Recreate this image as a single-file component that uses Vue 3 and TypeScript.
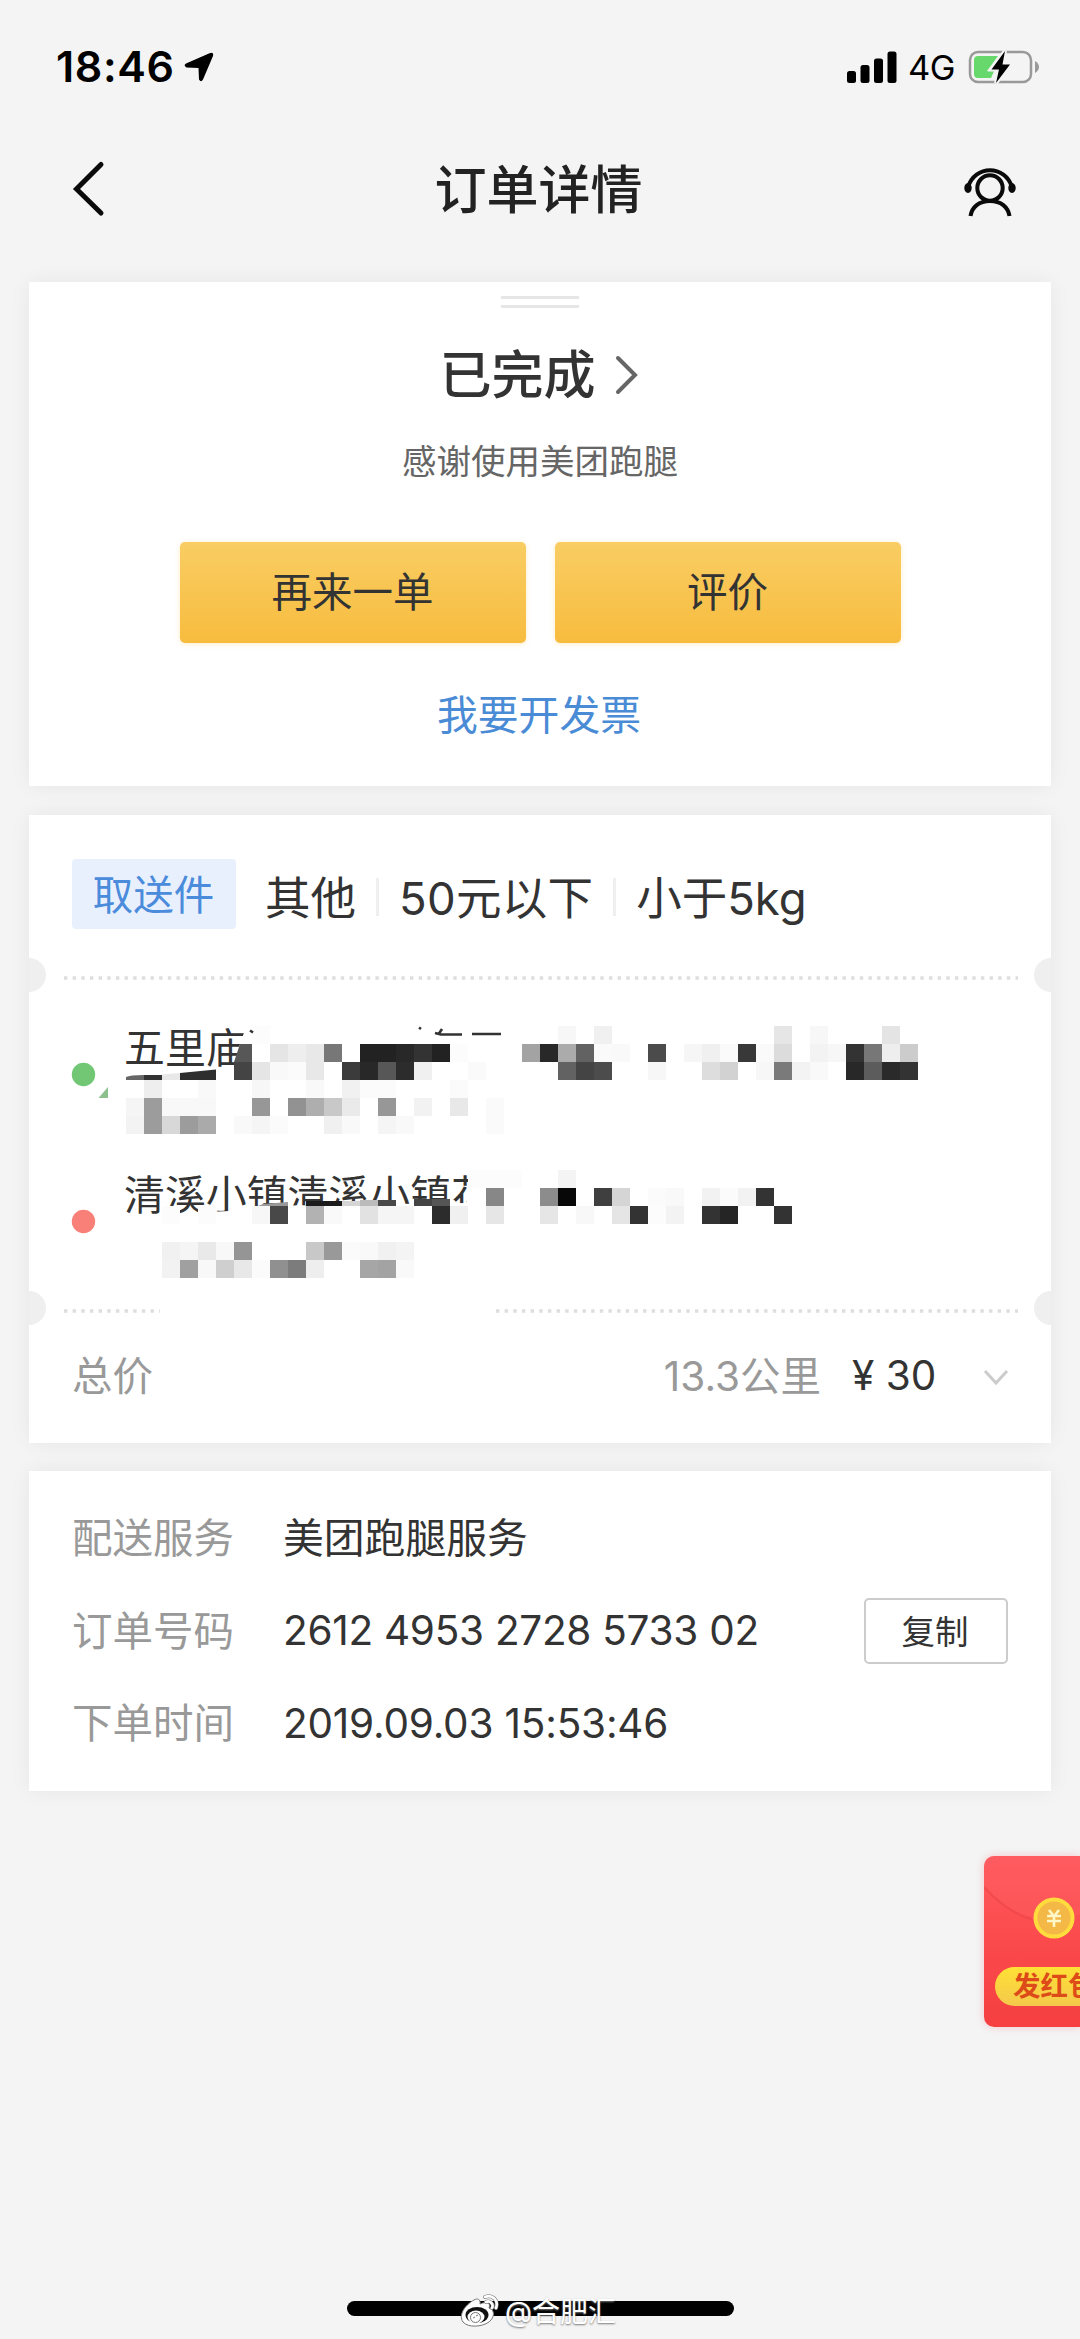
<script setup lang="ts">
type Cell = { x: number; y: number; c: string }

// Privacy mosaic: row -> [column, grey level in hex]
const mosaic: Record<number, [number, string][]> = {
  0: [[7, 'fc'], [24, 'f7'], [26, 'f0'], [36, 'e6'], [38, 'f7'], [42, 'e4']],
  1: [[8, 'e5'], [9, 'ee'], [10, 'e8'], [11, '77'], [13, '22'], [14, '22'], [15, '28'], [16, '33'], [17, '22'], [18, 'fc'], [22, 'a3'], [23, '28'], [24, 'ab'], [25, '62'], [26, 'fa'], [27, 'f9'], [29, '4b'], [31, 'f6'], [32, 'f0'], [33, 'fa'], [34, '38'], [35, 'fa'], [36, 'dc'], [38, 'f3'], [39, 'f7'], [40, '33'], [41, '77'], [42, 'ee'], [43, 'cc']],
  2: [[6, '44'], [7, 'e5'], [8, 'f9'], [9, 'fb'], [10, 'e8'], [12, '3b'], [13, '28'], [14, '57'], [15, '2c'], [16, 'f0'], [19, 'fa'], [24, '62'], [25, '44'], [26, '4c'], [29, 'f7'], [32, 'dd'], [33, 'd2'], [35, 'f7'], [36, '7a'], [37, 'f3'], [38, 'f9'], [40, '28'], [41, '5c'], [42, '2a'], [43, '33']],
  3: [[1, 'ee'], [4, 'f9'], [7, 'f7'], [10, 'f9'], [12, 'f1'], [13, 'fb'], [14, 'fb'], [18, 'fb']],
  4: [[0, 'f5'], [1, '9c'], [2, 'f8'], [3, 'f8'], [4, 'f8'], [7, '97'], [9, '92'], [10, 'ae'], [11, 'c8'], [12, 'ea'], [14, '97'], [16, 'f2'], [18, 'e8'], [20, 'fa']],
  5: [[0, 'f3'], [1, '9c'], [2, 'd8'], [3, '9c'], [4, 'aa'], [6, 'f9'], [7, 'f5'], [8, 'fb'], [11, 'f0'], [12, 'f9'], [14, 'f5'], [15, 'f9'], [20, 'fa']],
  8: [[19, 'fc'], [20, 'fc'], [21, 'fc'], [24, 'f4']],
  9: [[20, '87'], [23, '8c'], [24, '08'], [26, '3f'], [27, 'd5'], [29, 'fb'], [30, 'f9'], [32, 'f2'], [33, 'fb'], [34, 'f2'], [35, '33']],
  10: [[2, 'fc'], [4, 'fc'], [7, 'f7'], [8, '48'], [10, 'b2'], [11, 'f9'], [13, 'e2'], [14, 'f5'], [15, 'f5'], [17, '2c'], [18, 'f0'], [20, 'e6'], [23, 'e6'], [25, 'f8'], [27, 'e5'], [28, '33'], [29, 'fc'], [30, 'f3'], [32, '33'], [33, '25'], [36, '33']],
  12: [[2, 'f1'], [3, 'f5'], [4, 'e9'], [5, 'f8'], [6, '95'], [10, 'c8'], [11, '99'], [12, 'fb'], [13, 'f9'], [14, 'f1'], [15, 'f4']],
  13: [[2, 'f2'], [3, 'a0'], [4, 'f8'], [5, 'cf'], [6, 'e8'], [7, 'fb'], [8, '90'], [9, '7c'], [10, 'ee'], [13, 'a6'], [14, 'a3'], [15, 'f9']],
}
const cells: Cell[] = Object.entries(mosaic).flatMap(([r, cols]) =>
  cols.map(([c, g]) => ({ x: c * 18, y: Number(r) * 18, c: '#' + g + g + g })),
)

const info = [
  { label: '配送服务', value: '美团跑腿服务', kind: 'cjk', copy: false },
  { label: '订单号码', value: '2612 4953 2728 5733 02', kind: 'num', copy: true },
  { label: '下单时间', value: '2019.09.03 15:53:46', kind: 'date', copy: false },
]
</script>

<template>
  <div class="screen">
    <header class="status">
      <div class="left">
        <span class="time">18:46</span>
        <svg width="30" height="32" viewBox="0 0 30 32"><path d="M25.500 2.300Q30 .5 29 5L19 28.500Q17 32 15 28.500L14.500 17L2.500 16.500Q-1 14.500 2 12.500Z" fill="#000" /></svg>
      </div>
      <div class="right">
        <svg width="50" height="32" viewBox="0 0 50 32"><rect x="0" y="20" width="9" height="12" rx="2.500" /><rect x="13.500" y="14" width="9" height="18" rx="2.500" /><rect x="27" y="7.500" width="9" height="24.500" rx="2.500" /><rect x="40.500" y="0.500" width="9" height="31.500" rx="2.500" /></svg>
        <span class="net">4G</span>
        <svg class="battery" width="72" height="36" viewBox="0 0 72 36">
          <rect x="2" y="3" width="61" height="30" rx="8" fill="none" stroke="#999" stroke-width="2.500" />
          <path d="M67 12Q71 14.500 71 18T67 24Z" fill="#999" />
          <path d="M10 7H30L19 22H26L23 29H10Q6 29 6 25V11Q6 7 10 7Z" fill="#67d86c" />
          <path d="M37 2L23.500 20.500H31L28 34L42 15.500H34.500Z" fill="#000" stroke="#f4f4f4" stroke-width="4" paint-order="stroke" />
        </svg>
      </div>
    </header>

    <nav class="nav">
      <svg width="36" height="60" viewBox="0 0 36 60"><path d="M30 5.500L5.500 30L30 54" fill="none" stroke="#0a0a0a" stroke-width="5" stroke-linecap="round" stroke-linejoin="miter" /></svg>
      <h1>订单详情</h1>
      <svg width="52" height="54" viewBox="0 0 52 54" fill="none" stroke="#0a0a0a" stroke-width="4">
        <path d="M4.500 23A22.500 22.500 0 0 1 47.500 23" />
        <ellipse cx="4" cy="25" rx="2.200" ry="3.500" fill="#0a0a0a" stroke-width="3" /><ellipse cx="48" cy="25" rx="2.200" ry="3.500" fill="#0a0a0a" stroke-width="3" />
        <circle cx="26" cy="25" r="12.700" /><path d="M6.500 53C8 44 15 38 26 38S44 44 45.500 53" />
      </svg>
    </nav>

    <main>
      <section class="card state">
        <div class="handle"></div>
        <div class="done"><span>已完成</span><svg width="24" height="40" viewBox="0 0 24 40"><path d="M3 3L20 20L3 37" fill="none" stroke="#666" stroke-width="4" stroke-linecap="round" /></svg></div>
        <p class="thanks">感谢使用美团跑腿</p>
        <div class="buttons"><button>再来一单</button><button>评价</button></div>
        <a class="invoice">我要开发票</a>
      </section>

      <section class="card order">
        <div class="goods">
          <span class="tag">取送件</span>
          <span>其他</span><i></i><span class="amount">50元以下</span><i></i><span>小于5kg</span>
        </div>
        <div class="divider"><svg width="960" height="6"><line x1="2" y1="3" x2="956" y2="3" /></svg></div>
        <div class="route">
          <svg class="dots" width="40" height="180" viewBox="0 0 40 180"><circle cx="12.500" cy="14.500" r="11.700" fill="#71c774" /><path d="M27.500 38L37 27V38Z" fill="#8cc08d" /><circle cx="12.500" cy="161.500" r="11.700" fill="#f98078" /></svg>
          <div class="stops">
            <p class="from">五里庙</p>
            <p class="to">清溪小镇清溪小镇花</p>
            <svg class="mosaic" width="820" height="252" viewBox="0 0 820 252">
              <rect v-for="(b, i) in cells" :key="i" :x="b.x" :y="b.y" width="18" height="18" :fill="b.c" shape-rendering="crispEdges" />
              <path d="M114 18H126V36H108Z" fill="#575757" />
              <path d="M0 51Q4 49 18 49V54H0Z" fill="#666" /><path d="M18 49H36V54H18Z" fill="#333" /><path d="M36 48.500L54 47V54H36Z" fill="#e8e8e8" /><path d="M54 47L90 43.500V54H54Z" fill="#2e2e2e" />
              <path d="M124 4.500L127 6.500M293 1.500L295 3M309 7L315 8.500H336M313 7.500L316 3M346 8H375" fill="none" stroke="#333" stroke-width="2.600" />
              <path d="M137 178L162 176V180H132Z" fill="#999" /><path d="M180 175H216V180H180Z" fill="#1b1b1b" /><path d="M216 175H234V180H216Z" fill="#d5d5d5" /><path d="M234 174H252V180H234Z" fill="#bbb" /><path d="M252 174H270V180H252Z" fill="#484848" /><path d="M288 173H306V180H288Z" fill="#444" /><path d="M306 173H324V180H306Z" fill="#555" />
            </svg>
          </div>
        </div>
        <div class="divider"><svg width="960" height="6"><line x1="2" y1="3" x2="98" y2="3" /><line x1="434" y1="3" x2="956" y2="3" /></svg></div>
        <div class="total">
          <span class="label">总价</span>
          <span class="km">13.3公里</span><span class="price">¥ 30</span>
          <svg width="26" height="18" viewBox="0 0 26 18"><path d="M2 2L13 14L24 2" fill="none" stroke="#ccc" stroke-width="3" /></svg>
        </div>
      </section>

      <section class="card info">
        <div v-for="r in info" :key="r.label" class="row">
          <span class="label">{{ r.label }}</span><span class="value" :class="r.kind">{{ r.value }}</span>
          <button v-if="r.copy" class="copy">复制</button>
        </div>
      </section>
    </main>

    <aside class="packet">
      <svg class="flap" width="96" height="171" viewBox="0 0 96 171"><path d="M0 0H96V58Q70 72 46 63Q24 56 0 31Z" fill="#ff5e62" opacity=".4" /><path d="M0 31Q24 57 48 63" fill="none" stroke="#e53b42" stroke-width="2.500" opacity=".4" /></svg>
      <svg class="coin" width="42" height="42" viewBox="0 0 42 42"><circle cx="21" cy="21" r="18.500" fill="#f3b845" stroke="#ffdb3d" stroke-width="4" /><path d="M16 13L20 18M26 13L22 18M14 19H28M14 24H28M21 18V30" stroke="#fff7c7" stroke-width="2.600" fill="none" /></svg>
      <span class="send">发红包</span>
    </aside>

    <footer class="home">
      <div class="bar"></div>
      <div class="mark">
        <svg width="40" height="34" viewBox="0 0 40 34"><path d="M14 6C17 4 21 5 20 10C27 7 31 9 29 14C35 16 35 23 29 28C22 33 8 34 3 28C-2 21 5 11 14 6Z" fill="#fff" stroke="#777" stroke-width="1" /><ellipse cx="17" cy="21" rx="11.500" ry="8" fill="#111" /><ellipse cx="16" cy="23" rx="8.500" ry="6.500" fill="#fff" /><circle cx="15.500" cy="23.500" r="5" fill="#fff" stroke="#777" /><path d="M13 24L15 23M16 22L18 21" stroke="#777" /><path d="M25 3C32 0 39 6 36 14M26 8C30 6 34 10 32 14" fill="none" stroke="#777" stroke-width="3.800" stroke-linecap="round" /><path d="M25 3C32 0 39 6 36 14M26 8C30 6 34 10 32 14" fill="none" stroke="#fff" stroke-width="2.600" stroke-linecap="round" /></svg>
        <span>@合肥汇</span>
      </div>
    </footer>
  </div>
</template>

<style>
body { background: #f4f4f4; }
</style>
<style scoped>
* { box-sizing: border-box; }
h1, p { margin: 0; font-weight: 400; }
svg { display: block; flex: none; }
button { font: inherit; padding: 0; border: 0; color: #333; }
.screen { position: relative; display: flex; flex-direction: column; width: 1080px; height: 2339px; overflow: hidden; background: #f4f4f4; color: #333; font-family: Inter, "Noto Sans CJK SC", sans-serif; font-size: 40.5px; white-space: nowrap; }
.status { display: flex; justify-content: space-between; height: 133px; padding: 0 40px 0 56px; }
.left, .right { display: flex; align-items: center; color: #000; }
.time { font-size: 43px; font-weight: 600; width: 128px; margin-bottom: 2px; letter-spacing: .6px; }
.net { font-size: 34.500px; width: 48px; margin: 2px 12px 0 11px; letter-spacing: -.6px; }
.nav { display: flex; align-items: center; justify-content: space-between; height: 114px; padding: 0 64px 0 71px; }
.nav svg:first-child { margin-bottom: 2px; }
h1 { margin: 0 0 7px 6px; font-size: 52px; font-weight: 500; color: #222; }
main { display: flex; flex-direction: column; gap: 28px; padding: 35px 29px 0; }
.card { background: #fff; box-shadow: 0 0 20px rgba(0, 0, 0, .06); }
.state { display: flex; flex-direction: column; align-items: center; height: 504px; }
.handle { width: 78px; height: 12px; margin-top: 14px; border-top: 3px solid #e6e6e6; border-bottom: 3px solid #e6e6e6; }
.done { display: flex; align-items: center; height: 60px; margin: 37px 2px 0 0; gap: 19px; font-size: 52px; font-weight: 500; }
.done span { margin-bottom: 7px; }
.thanks { margin-top: 31px; height: 52px; line-height: 52px; font-size: 34.500px; color: #666; }
.buttons { display: flex; gap: 29px; margin-top: 54px; }
.buttons button { width: 346px; height: 101px; padding-bottom: 6px; border-radius: 5px; background: linear-gradient(#f9cd63, #f7bc3e); box-shadow: 0 1px 5px rgba(248, 200, 90, .35); }
.invoice { margin: 42px 2px 0 0; height: 60px; line-height: 60px; font-size: 40.800px; color: #4a8bd6; }
.order { height: 628px; margin-top: 1px; }
.goods { display: flex; align-items: center; height: 160px; padding: 0 43px; font-size: 45.500px; }
.tag { width: 164px; height: 70px; margin: -2px 29px 0 0; padding-right: 1px; border-radius: 4px; line-height: 73px; text-align: center; font-size: 40.500px; color: #4a8bdb; background: #e9f0fd; }
.goods i { width: 3px; height: 38px; margin: 4px 20px 0; background: #efefef; }
.goods .amount { letter-spacing: .25px; }
.divider { position: relative; height: 6px; padding-left: 33px; }
.divider line { stroke: #dedede; stroke-width: 3.400; stroke-dasharray: 3.400 5.250; }
.divider::before, .divider::after { content: ""; position: absolute; top: -17px; width: 17px; height: 34px; background: #efefef; }
.divider::before { left: 0; border-radius: 0 17px 17px 0; }
.divider::after { right: 0; border-radius: 17px 0 0 17px; }
.route { display: flex; height: 327px; padding: 79px 0 0 42px; }
.stops { position: relative; width: 820px; margin: -33px 0 0 15px; font-size: 40.900px; }
.from, .to { margin-left: -2px; }
.from { height: 147px; line-height: 42px; clip-path: polygon(0 0, 122px 0, 115px 20px, 110px 42px, 0 42px); }
.to { line-height: 42px; clip-path: polygon(0 0, 346px 0, 346px 17px, 342px 29px, 127px 32px, 127px 36px, 0 42px); }
.mosaic { position: absolute; left: 0; top: -1px; }
.total { display: flex; align-items: center; height: 129px; padding: 0 42px 2px 43px; }
.label { color: #999; }
.total .label, .km { margin-bottom: 8px; }
.km { margin-left: auto; margin-right: 31px; color: #999; }
.price { width: 86px; margin-right: 45px; margin-bottom: 4px; font-size: 40.500px; }
.info { height: 320px; padding: 21px 43px 0 43px; }
.row { display: flex; align-items: center; height: 92.500px; }
.row .label { width: 211px; margin-bottom: 5px; }
.value.cjk { margin-bottom: 5px; font-size: 40.800px; }
.value.num { letter-spacing: -.28px; }
.value.date { letter-spacing: -.2px; }
.copy { width: 144px; height: 66px; margin-left: auto; padding: 0 2px 2px 0; border: 2px solid #ccc; border-radius: 5px; background: #fff; font-size: 33.500px; }
.packet { position: absolute; right: 0; top: 1856px; width: 96px; height: 171px; overflow: hidden; border-radius: 10px 0 0 10px; background: linear-gradient(#fe5a60, #fb4a4c 50%, #f53f40); box-shadow: 0 0 8px rgba(245, 90, 110, .3); }
.flap { position: absolute; left: 0; top: 0; }
.coin { position: absolute; left: 49px; top: 41px; }
.send { position: absolute; left: 11px; top: 111px; width: 120px; height: 39px; padding-left: 18px; border-radius: 20px; line-height: 39px; font-size: 27.500px; font-weight: 700; color: #dd4b19; background: linear-gradient(#ffe135, #f4c84c); }
.home { position: absolute; left: 347px; top: 2301px; width: 387px; }
.bar { height: 15px; border-radius: 8px; background: #000; }
.mark { position: absolute; left: 113px; top: -7px; display: flex; gap: 5px; color: #fff; font-size: 28px; line-height: 36px; text-shadow: 0 1px 2px #777; }
</style>
